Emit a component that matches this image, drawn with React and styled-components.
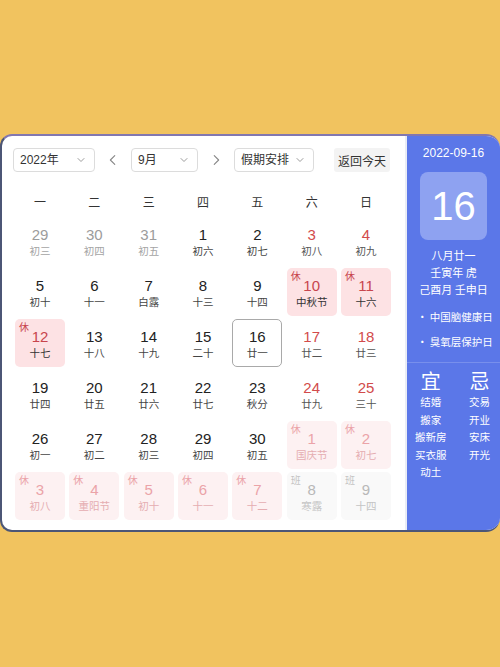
import styled, { createGlobalStyle } from "styled-components";

const GlobalStyle = createGlobalStyle`
  body {
    margin: 0;
    font-family: "Liberation Sans", "Noto Sans CJK SC", sans-serif;
  }
`;

const weekdays = ["一", "二", "三", "四", "五", "六", "日"];

// kind: prev | next ; mark: 休 | 班
const days = [
  { d: 29, l: "初三", kind: "prev" },
  { d: 30, l: "初四", kind: "prev" },
  { d: 31, l: "初五", kind: "prev" },
  { d: 1, l: "初六" },
  { d: 2, l: "初七" },
  { d: 3, l: "初八", red: true },
  { d: 4, l: "初九", red: true },
  { d: 5, l: "初十" },
  { d: 6, l: "十一" },
  { d: 7, l: "白露" },
  { d: 8, l: "十三" },
  { d: 9, l: "十四" },
  { d: 10, l: "中秋节", red: true, mark: "休" },
  { d: 11, l: "十六", red: true, mark: "休" },
  { d: 12, l: "十七", red: true, mark: "休" },
  { d: 13, l: "十八" },
  { d: 14, l: "十九" },
  { d: 15, l: "二十" },
  { d: 16, l: "廿一", today: true },
  { d: 17, l: "廿二", red: true },
  { d: 18, l: "廿三", red: true },
  { d: 19, l: "廿四" },
  { d: 20, l: "廿五" },
  { d: 21, l: "廿六" },
  { d: 22, l: "廿七" },
  { d: 23, l: "秋分" },
  { d: 24, l: "廿九", red: true },
  { d: 25, l: "三十", red: true },
  { d: 26, l: "初一" },
  { d: 27, l: "初二" },
  { d: 28, l: "初三" },
  { d: 29, l: "初四" },
  { d: 30, l: "初五" },
  { d: 1, l: "国庆节", kind: "next", mark: "休" },
  { d: 2, l: "初七", kind: "next", mark: "休" },
  { d: 3, l: "初八", kind: "next", mark: "休" },
  { d: 4, l: "重阳节", kind: "next", mark: "休" },
  { d: 5, l: "初十", kind: "next", mark: "休" },
  { d: 6, l: "十一", kind: "next", mark: "休" },
  { d: 7, l: "十二", kind: "next", mark: "休" },
  { d: 8, l: "寒露", kind: "next", mark: "班" },
  { d: 9, l: "十四", kind: "next", mark: "班" },
];

const yi = ["结婚", "搬家", "搬新房", "买衣服", "动土"];
const ji = ["交易", "开业", "安床", "开光"];

const Chevron = ({ dir = "down", size = 12, color = "#999" }) => {
  const paths = {
    down: "M4 6l4 4 4-4",
    left: "M10 3L5 8l5 5",
    right: "M6 3l5 5-5 5",
  };
  return (
    <svg width={size} height={size} viewBox="0 0 16 16" fill="none">
      <path d={paths[dir]} stroke={color} strokeWidth="1.3" strokeLinecap="round" strokeLinejoin="round" />
    </svg>
  );
};

const cellColors = (day) => {
  if (day.kind === "prev") return { num: "#9c9c9c", lunar: "#a4a4a4", bg: "transparent", mark: "" };
  if (day.kind === "next" && day.mark === "休")
    return { num: "#eba3a8", lunar: "#e5adb1", bg: "#fdf1f2", mark: "#eba3a8" };
  if (day.kind === "next") return { num: "#b8b8b8", lunar: "#c4c4c4", bg: "#f9f9f9", mark: "#c4c4c4" };
  if (day.mark) return { num: "#c8454d", lunar: "#333", bg: "#fde2e4", mark: "#c8454d" };
  if (day.red) return { num: "#d24b4b", lunar: "#555", bg: "transparent", mark: "" };
  return { num: "#222", lunar: "#444", bg: "transparent", mark: "" };
};

const App = () => {
  return (
    <Page>
      <GlobalStyle />
      <Card>
        <Main>
          <Toolbar>
            <Select $w={82}>
              <span>2022年</span>
              <Chevron />
            </Select>
            <Arrow>
              <Chevron dir="left" size={14} color="#888" />
            </Arrow>
            <Select $w={67}>
              <span>9月</span>
              <Chevron />
            </Select>
            <Arrow>
              <Chevron dir="right" size={14} color="#888" />
            </Arrow>
            <Select $w={80}>
              <span>假期安排</span>
              <Chevron />
            </Select>
            <TodayButton>返回今天</TodayButton>
          </Toolbar>
          <Weekdays>
            {weekdays.map((w) => (
              <Weekday key={w}>{w}</Weekday>
            ))}
          </Weekdays>
          <Grid>
            {days.map((day, i) => {
              const c = cellColors(day);
              return (
                <Cell key={i} $bg={c.bg} $today={day.today}>
                  {day.mark && <Mark $color={c.mark}>{day.mark}</Mark>}
                  <DayNum $color={c.num}>{day.d}</DayNum>
                  <Lunar $color={c.lunar}>{day.l}</Lunar>
                </Cell>
              );
            })}
          </Grid>
        </Main>
        <Side>
          <SideDate>2022-09-16</SideDate>
          <BigDay>16</BigDay>
          <LunarInfo>
            <div>八月廿一</div>
            <div>壬寅年 虎</div>
            <div>己酉月 壬申日</div>
          </LunarInfo>
          <Festivals>
            <div>• 中国脑健康日</div>
            <div>• 臭氧层保护日</div>
          </Festivals>
          <YiJi>
            <YiJiCol>
              <YiJiTitle>宜</YiJiTitle>
              {yi.map((t) => (
                <YiJiItem key={t}>{t}</YiJiItem>
              ))}
            </YiJiCol>
            <YiJiCol>
              <YiJiTitle>忌</YiJiTitle>
              {ji.map((t) => (
                <YiJiItem key={t}>{t}</YiJiItem>
              ))}
            </YiJiCol>
          </YiJi>
        </Side>
      </Card>
    </Page>
  );
};

export default App;

const Page = styled.div`
  width: 500px;
  height: 667px;
  background: #f1c35f;
  padding-top: 134px;
  box-sizing: border-box;
`;

const Card = styled.div`
  display: flex;
  width: 500px;
  height: 398px;
  box-sizing: border-box;
  background: #fff;
  border: 2px solid #4c5676;
  border-right: none;
  border-top-color: #8277b0;
  border-radius: 12px 14px 14px 12px;
  overflow: hidden;
`;

const Main = styled.div`
  width: 405px;
  padding: 12px 0 0 11px;
  box-sizing: border-box;
  border-right: 2px solid #e9ecf5;
`;

const Toolbar = styled.div`
  display: flex;
  align-items: center;
  height: 24px;
`;

const Select = styled.div`
  width: ${(p) => p.$w}px;
  height: 24px;
  box-sizing: border-box;
  border: 1px solid #dcdcdc;
  border-radius: 4px;
  display: flex;
  align-items: center;
  justify-content: space-between;
  padding: 0 7px 0 6px;
  font-family: "Liberation Sans", "Noto Sans CJK SC", sans-serif;
  font-size: 12px;
  color: #333;
  & > span {
    line-height: 1;
  }
`;

const Arrow = styled.div`
  width: 36px;
  display: flex;
  justify-content: center;
  align-items: center;
`;

const TodayButton = styled.div`
  margin-left: 20px;
  width: 56px;
  height: 24px;
  display: flex;
  align-items: center;
  justify-content: center;
  background: #f3f3f3;
  border-radius: 3px;
  font-family: "Noto Sans CJK SC", sans-serif;
  font-size: 12px;
  color: #333;
`;

const Weekdays = styled.div`
  margin: 13px 0 0 2px;
  width: 376px;
  height: 32px;
  display: grid;
  grid-template-columns: repeat(7, 1fr);
  column-gap: 4.3px;
  align-items: center;
`;

const Weekday = styled.div`
  text-align: center;
  font-family: "Noto Sans CJK SC", sans-serif;
  font-size: 12px;
  color: #333;
`;

const Grid = styled.div`
  margin-left: 2px;
  width: 376px;
  display: grid;
  grid-template-columns: repeat(7, 1fr);
  grid-auto-rows: 48px;
  column-gap: 4.3px;
  row-gap: 3px;
`;

const Cell = styled.div`
  position: relative;
  display: flex;
  flex-direction: column;
  align-items: center;
  justify-content: center;
  padding-top: 1px;
  background: ${(p) => p.$bg};
  border-radius: 5px;
  box-sizing: border-box;
  border: ${(p) => (p.$today ? "1.5px solid #a9a9a9" : "none")};
`;

const Mark = styled.span`
  position: absolute;
  top: 2px;
  left: 4px;
  font-family: "Noto Sans CJK SC", sans-serif;
  font-size: 10px;
  line-height: 12px;
  color: ${(p) => p.$color};
`;

const DayNum = styled.div`
  font-family: "Liberation Sans", sans-serif;
  font-size: 15px;
  line-height: 18px;
  color: ${(p) => p.$color};
`;

const Lunar = styled.div`
  font-family: "Noto Sans CJK SC", sans-serif;
  font-size: 10.5px;
  line-height: 14px;
  color: ${(p) => p.$color};
`;

const Side = styled.div`
  flex: 1;
  background: #5b77e8;
  color: #fff;
  display: flex;
  flex-direction: column;
  align-items: center;
  padding-top: 10px;
  font-family: "Noto Sans CJK SC", sans-serif;
`;

const SideDate = styled.div`
  font-family: "Liberation Sans", sans-serif;
  font-size: 12px;
  line-height: 14px;
`;

const BigDay = styled.div`
  margin-top: 12px;
  width: 67px;
  height: 68px;
  border-radius: 8px;
  background: #8ea2f1;
  display: flex;
  align-items: center;
  justify-content: center;
  font-family: "Liberation Sans", sans-serif;
  font-size: 40px;
`;

const LunarInfo = styled.div`
  margin-top: 7px;
  display: flex;
  flex-direction: column;
  align-items: center;
  font-size: 11px;
  line-height: 17px;
`;

const Festivals = styled.div`
  margin-top: 6px;
  width: 100%;
  padding-left: 10px;
  box-sizing: border-box;
  font-size: 10.5px;
  line-height: 25px;
`;

const YiJi = styled.div`
  margin-top: 8px;
  width: 100%;
  flex: 1;
  border-top: 1px solid rgba(255, 255, 255, 0.18);
  display: flex;
  justify-content: space-between;
  padding: 6px 10px 0 8px;
  box-sizing: border-box;
`;

const YiJiCol = styled.div`
  display: flex;
  flex-direction: column;
  align-items: center;
`;

const YiJiTitle = styled.div`
  font-size: 20px;
  line-height: 24px;
`;

const YiJiItem = styled.div`
  font-size: 10.5px;
  line-height: 17.5px;
`;
